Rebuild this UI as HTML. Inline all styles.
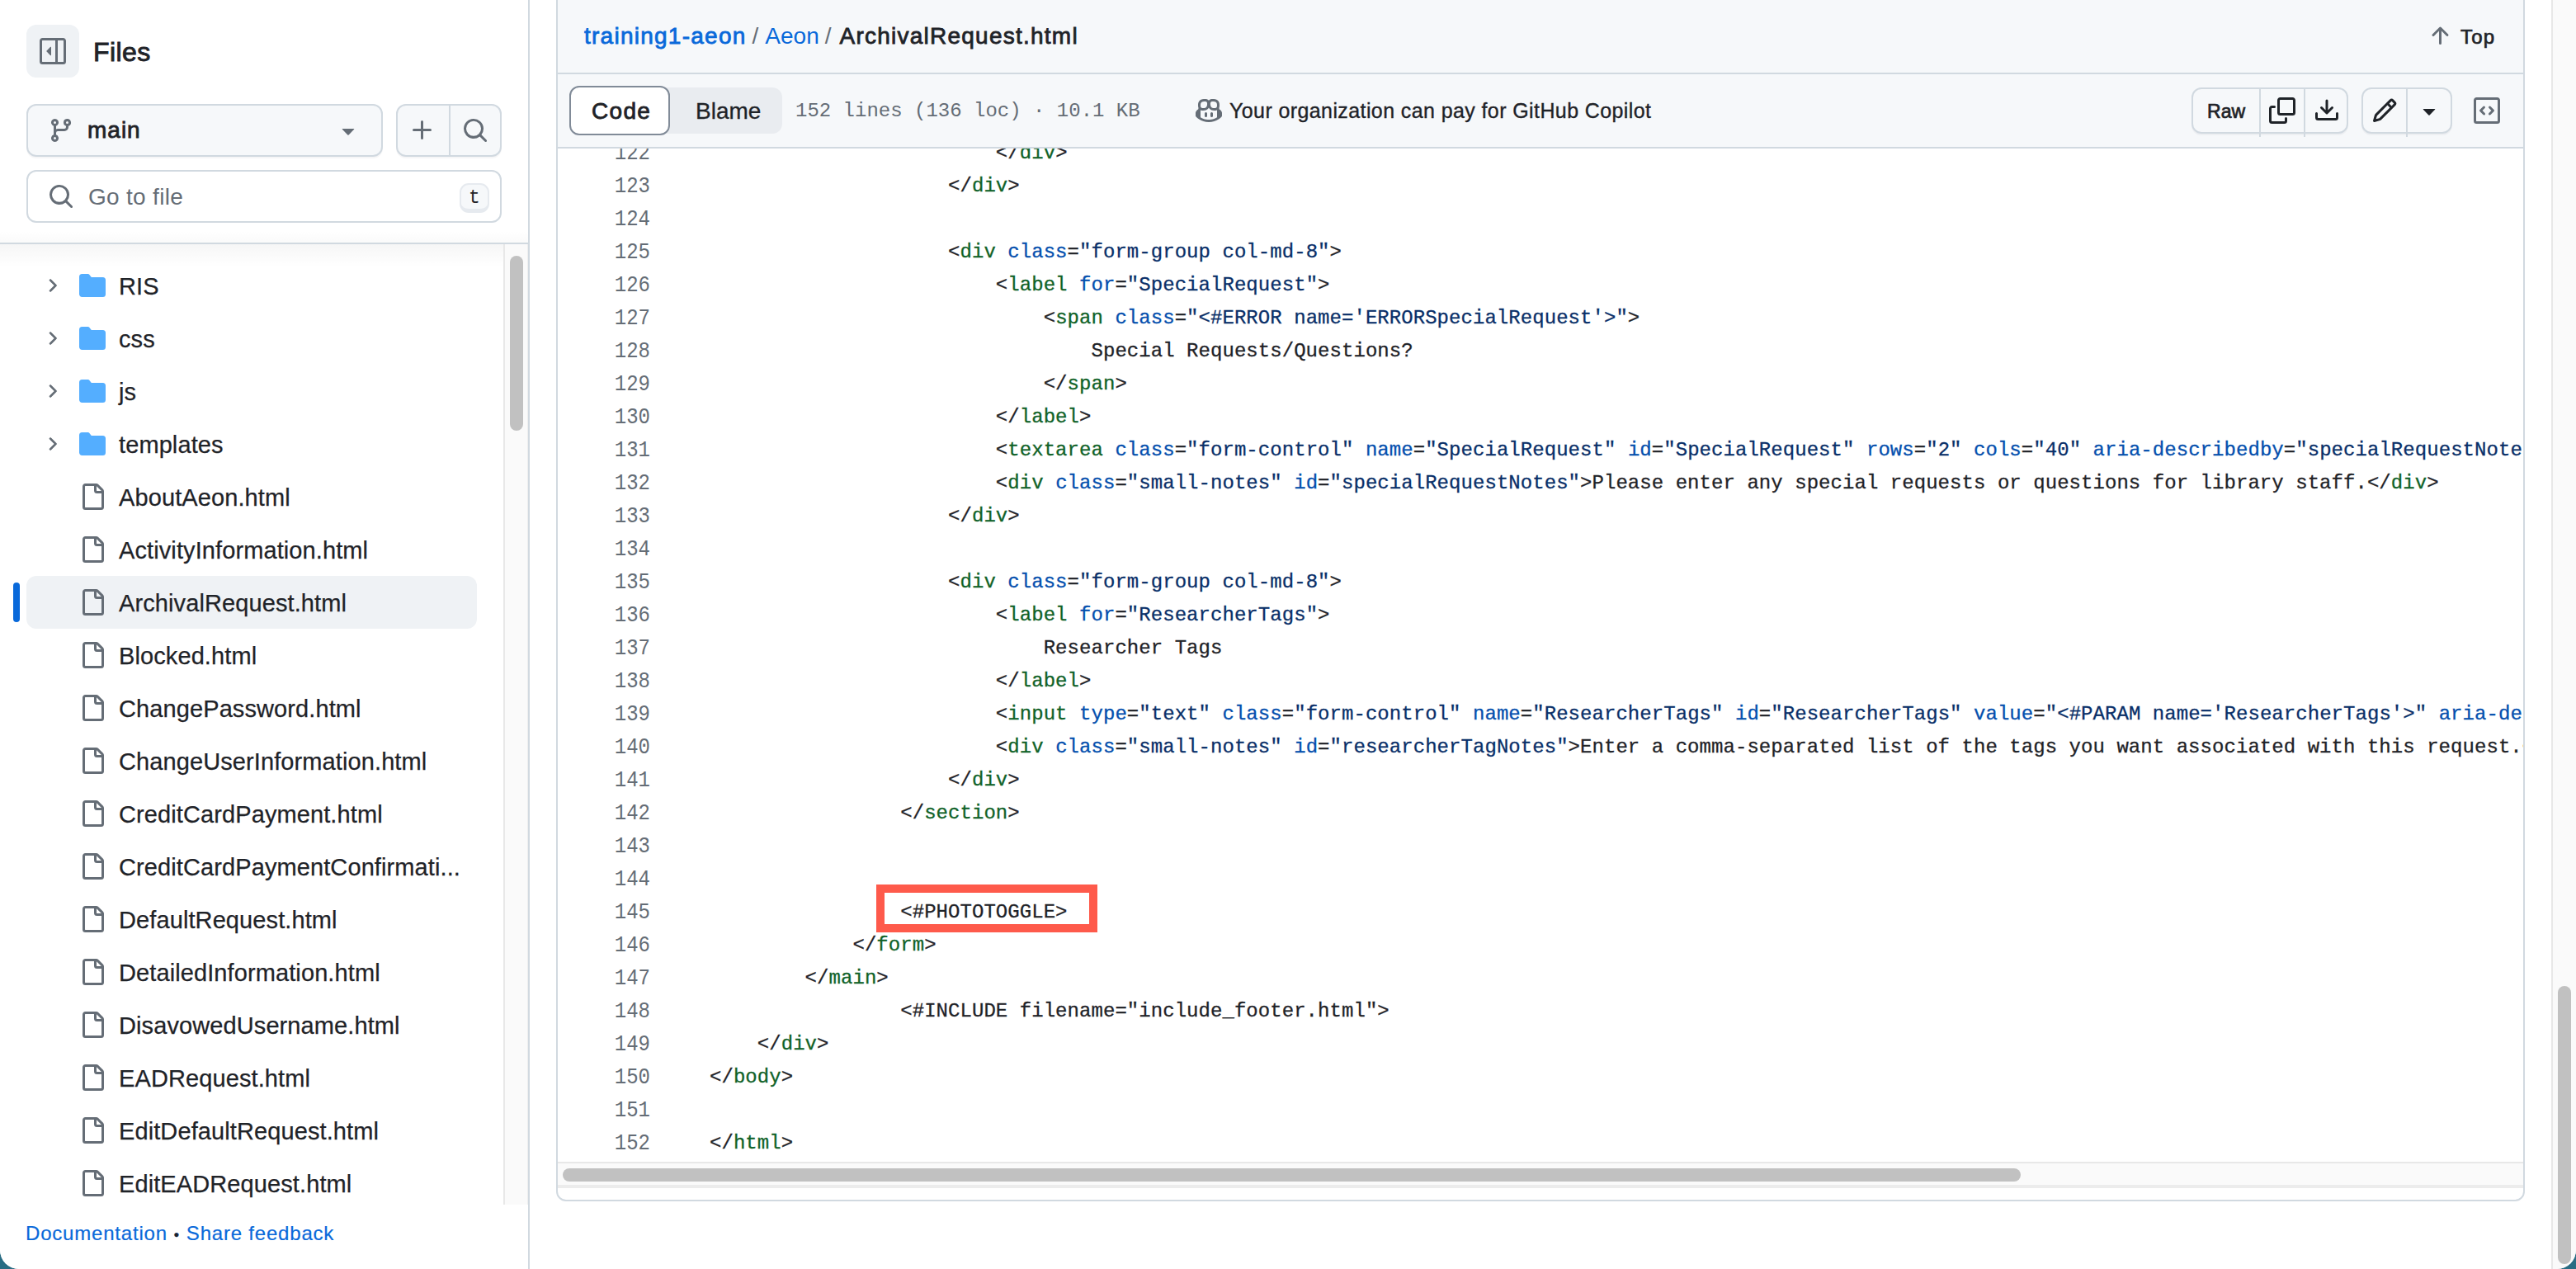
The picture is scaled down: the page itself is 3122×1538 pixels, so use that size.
<!DOCTYPE html>
<html><head><meta charset="utf-8">
<style>
html,body{margin:0;padding:0;}
html{background:#2a6d84;}
body{width:3122px;height:1538px;overflow:hidden;position:relative;font-family:"Liberation Sans",sans-serif;color:#1f2328;}
.win{position:absolute;left:0;top:0;width:3122px;height:1538px;background:#fff;border-radius:0 0 23px 23px;overflow:hidden;}
.abs{position:absolute;}
svg{display:block;}
/* sidebar */
.side{position:absolute;left:0;top:0;width:640px;height:1538px;background:#fff;border-right:2px solid #d1d9e0;}
.tog{left:32px;top:30px;width:64px;height:64px;background:#eff2f5;border-radius:12px;}
.files{left:113px;top:38px;font-size:32px;line-height:50px;letter-spacing:0.4px;white-space:nowrap;-webkit-text-stroke:0.9px #1f2328;}
.btn{background:#f6f8fa;border:2px solid #d1d9e0;border-radius:12px;box-shadow:0 2px 0 rgba(31,35,40,0.04);box-sizing:border-box;}
.hdrline{left:0;top:294px;width:640px;height:2px;background:#d1d9e0;}
.shadow{left:0;top:296px;width:610px;height:28px;background:linear-gradient(rgba(0,0,0,0.035),rgba(0,0,0,0));}
.shadow2{left:0;top:280px;width:640px;height:14px;background:linear-gradient(rgba(0,0,0,0),rgba(0,0,0,0.02));}
.tree{left:0;top:296px;width:610px;height:1164px;overflow:hidden;}
.row{position:absolute;left:32px;width:546px;height:64px;}
.row .ic{position:absolute;left:64px;top:16px;}
.row .chev{position:absolute;left:19px;top:20px;}
.row .t{position:absolute;left:112px;top:1px;line-height:64px;font-size:29px;letter-spacing:0.1px;white-space:nowrap;color:#1f2328;-webkit-text-stroke:0.25px #1f2328;}
.row.sel{background:#eff2f5;border-radius:12px;}
.selbar{left:16px;width:8px;height:48px;background:#0969da;border-radius:6px;}
.vtrack{left:610px;top:296px;width:30px;height:1164px;background:#fafafa;border-left:2px solid #e8e8e8;border-right:1px solid #efefef;box-sizing:border-box;}
.vthumb{left:618px;top:310px;width:16px;height:212px;background:#c1c1c1;border-radius:8px;}
.foot{left:31px;top:1477px;font-size:24px;line-height:36px;white-space:nowrap;color:#0969da;letter-spacing:0.8px;-webkit-text-stroke:0.2px #0969da;}
/* main panel */
.panel{position:absolute;left:674px;top:-20px;width:2386px;height:1476px;border:2px solid #d1d9e0;border-radius:12px;box-sizing:border-box;overflow:hidden;background:#fff;}
.phdr{position:absolute;left:0;top:0;width:100%;height:108px;background:#f6f8fa;border-bottom:2px solid #d1d9e0;box-sizing:border-box;}
.ptool{position:absolute;left:0;top:108px;width:100%;height:90px;background:#f6f8fa;border-bottom:2px solid #d1d9e0;box-sizing:border-box;}
.crumb{position:absolute;left:31px;top:34px;font-size:28px;line-height:40px;white-space:nowrap;}
.crumb a{color:#0969da;text-decoration:none;}
.crumb .sep{color:#656d76;margin:0 8px 0 7px;}
.code{position:absolute;left:0;top:198px;width:2382px;height:1228px;overflow:hidden;background:#fff;}
.ln{position:absolute;left:0;width:112px;text-align:right;font-family:"Liberation Mono",monospace;font-size:24px;line-height:40px;color:#656d76;transform:scaleY(1.17);transform-origin:50% 50%;}
.cl{position:absolute;left:184px;font-family:"Liberation Mono",monospace;font-size:24px;letter-spacing:0.05px;line-height:40px;white-space:pre;color:#1f2328;-webkit-text-stroke:0.3px currentColor;}
.tg{color:#116329;}
.at{color:#0550ae;}
.st{color:#0a3069;}
.htrack{position:absolute;left:0;top:1426px;width:100%;height:32px;background:#fafafa;border-top:2px solid #e8e8e8;border-bottom:4px solid #ececec;box-sizing:border-box;}
.hthumb{position:absolute;left:6px;top:1434px;width:1767px;height:16px;background:#c1c1c1;border-radius:8px;}
.redbox{left:1062px;top:1072px;width:268px;height:58px;border:10px solid #fe5a4b;box-sizing:border-box;}
.ptrack{left:3092px;top:0;width:30px;height:1538px;background:#fafafa;border-left:2px solid #e8e8e8;box-sizing:border-box;}
.pthumb{left:3100px;top:1195px;width:16px;height:337px;background:#c1c1c1;border-radius:8px;}
</style></head><body>
<div class="win">

<!-- SIDEBAR -->
<div class="side">
  <div class="abs tog">
    <svg class="abs" style="left:16px;top:16px" width="32" height="32" viewBox="0 0 16 16" fill="#656d76"><path fill-rule="evenodd" d="M1.75 0h12.5C15.216 0 16 .784 16 1.75v12.5A1.75 1.75 0 0 1 14.25 16H1.75A1.75 1.75 0 0 1 0 14.25V1.75C0 .784.784 0 1.75 0ZM1.75 1.5a.25.25 0 0 0-.25.25v12.5c0 .138.112.25.25.25H9.5v-13ZM11 1.5v13h3.25a.25.25 0 0 0 .25-.25V1.75a.25.25 0 0 0-.25-.25Z"/><path d="M4.177 7.823l2.396-2.396A.25.25 0 0 1 7 5.604v4.792a.25.25 0 0 1-.427.177L4.177 8.177a.25.25 0 0 1 0-.354Z"/></svg>
  </div>
  <div class="abs files">Files</div>

  <div class="abs btn" style="left:32px;top:126px;width:432px;height:64px;">
    <svg class="abs" style="left:24px;top:14px" width="32" height="32" viewBox="0 0 16 16" fill="#656d76"><path d="M9.5 3.25a2.25 2.25 0 1 1 3 2.122V6A2.5 2.5 0 0 1 10 8.5H6a1 1 0 0 0-1 1v1.128a2.251 2.251 0 1 1-1.5 0V5.372a2.25 2.25 0 1 1 1.5 0v1.836A2.493 2.493 0 0 1 6 7h4a1 1 0 0 0 1-1v-.628A2.25 2.25 0 0 1 9.5 3.25Zm-6 0a.75.75 0 1 0 1.5 0 .75.75 0 0 0-1.5 0Zm8.25-.75a.75.75 0 1 0 0 1.5.75.75 0 0 0 0-1.5ZM4.25 12a.75.75 0 1 0 0 1.5.75.75 0 0 0 0-1.5Z"/></svg>
    <div class="abs" style="left:72px;top:10px;font-size:28px;line-height:40px;letter-spacing:1px;-webkit-text-stroke:0.8px #1f2328;">main</div>
    <svg class="abs" style="left:372px;top:14px" width="32" height="32" viewBox="0 0 16 16" fill="#656d76"><path d="m4.427 7.427 3.396 3.396a.25.25 0 0 0 .354 0l3.396-3.396A.25.25 0 0 0 11.396 7H4.604a.25.25 0 0 0-.177.427Z"/></svg>
  </div>
  <div class="abs btn" style="left:480px;top:126px;width:128px;height:64px;">
    <div class="abs" style="left:62px;top:0;width:2px;height:60px;background:#d1d9e0"></div>
    <svg class="abs" style="left:14px;top:14px" width="32" height="32" viewBox="0 0 16 16" fill="#656d76"><path d="M7.75 2a.75.75 0 0 1 .75.75V7h4.25a.75.75 0 0 1 0 1.5H8.5v4.25a.75.75 0 0 1-1.5 0V8.5H2.75a.75.75 0 0 1 0-1.5H7V2.75A.75.75 0 0 1 7.75 2Z"/></svg>
    <svg class="abs" style="left:78px;top:14px" width="32" height="32" viewBox="0 0 16 16" fill="#656d76"><path d="M10.68 11.74a6 6 0 0 1-7.922-8.982 6 6 0 0 1 8.982 7.922l3.04 3.04a.749.749 0 0 1-.326 1.275.749.749 0 0 1-.734-.215ZM11.5 7a4.499 4.499 0 1 0-8.997 0A4.499 4.499 0 0 0 11.5 7Z"/></svg>
  </div>
  <div class="abs" style="left:32px;top:206px;width:576px;height:64px;border:2px solid #d1d9e0;border-radius:12px;box-sizing:border-box;background:#fff;">
    <svg class="abs" style="left:24px;top:14px" width="32" height="32" viewBox="0 0 16 16" fill="#656d76"><path d="M10.68 11.74a6 6 0 0 1-7.922-8.982 6 6 0 0 1 8.982 7.922l3.04 3.04a.749.749 0 0 1-.326 1.275.749.749 0 0 1-.734-.215ZM11.5 7a4.499 4.499 0 1 0-8.997 0A4.499 4.499 0 0 0 11.5 7Z"/></svg>
    <div class="abs" style="left:73px;top:11px;font-size:28px;line-height:40px;color:#656d76;letter-spacing:0.3px;">Go to file</div>
    <div class="abs" style="left:523px;top:14px;width:36px;height:36px;background:#f6f8fa;border:2px solid #e6eaef;border-bottom-width:5px;border-radius:11px;box-sizing:border-box;font-family:'Liberation Mono',monospace;font-size:23px;line-height:32px;text-align:center;color:#1f2328;">t</div>
  </div>

  <div class="abs shadow2"></div>
  <div class="abs hdrline"></div>
  <div class="abs tree" id="tree">
<div class="row" style="top:18px"><svg class="chev" width="24" height="24" viewBox="0 0 16 16" fill="#656d76" stroke="#656d76" stroke-width="0.4" stroke-linejoin="round"><path d="M6.22 3.22a.75.75 0 0 1 1.06 0l4.25 4.25a.75.75 0 0 1 0 1.06l-4.25 4.25a.751.751 0 0 1-1.042-.018.751.751 0 0 1-.018-1.042L9.94 8 6.22 4.28a.75.75 0 0 1 0-1.06Z"/></svg><svg class="ic" width="32" height="32" viewBox="0 0 16 16" fill="#54aeff"><path d="M1.75 1A1.75 1.75 0 0 0 0 2.75v10.5C0 14.216.784 15 1.75 15h12.5A1.75 1.75 0 0 0 16 13.25v-8.5A1.75 1.75 0 0 0 14.25 3H7.5a.25.25 0 0 1-.2-.1l-.9-1.2C6.07 1.26 5.55 1 5 1H1.75Z"/></svg><div class="t">RIS</div></div>
<div class="row" style="top:82px"><svg class="chev" width="24" height="24" viewBox="0 0 16 16" fill="#656d76" stroke="#656d76" stroke-width="0.4" stroke-linejoin="round"><path d="M6.22 3.22a.75.75 0 0 1 1.06 0l4.25 4.25a.75.75 0 0 1 0 1.06l-4.25 4.25a.751.751 0 0 1-1.042-.018.751.751 0 0 1-.018-1.042L9.94 8 6.22 4.28a.75.75 0 0 1 0-1.06Z"/></svg><svg class="ic" width="32" height="32" viewBox="0 0 16 16" fill="#54aeff"><path d="M1.75 1A1.75 1.75 0 0 0 0 2.75v10.5C0 14.216.784 15 1.75 15h12.5A1.75 1.75 0 0 0 16 13.25v-8.5A1.75 1.75 0 0 0 14.25 3H7.5a.25.25 0 0 1-.2-.1l-.9-1.2C6.07 1.26 5.55 1 5 1H1.75Z"/></svg><div class="t">css</div></div>
<div class="row" style="top:146px"><svg class="chev" width="24" height="24" viewBox="0 0 16 16" fill="#656d76" stroke="#656d76" stroke-width="0.4" stroke-linejoin="round"><path d="M6.22 3.22a.75.75 0 0 1 1.06 0l4.25 4.25a.75.75 0 0 1 0 1.06l-4.25 4.25a.751.751 0 0 1-1.042-.018.751.751 0 0 1-.018-1.042L9.94 8 6.22 4.28a.75.75 0 0 1 0-1.06Z"/></svg><svg class="ic" width="32" height="32" viewBox="0 0 16 16" fill="#54aeff"><path d="M1.75 1A1.75 1.75 0 0 0 0 2.75v10.5C0 14.216.784 15 1.75 15h12.5A1.75 1.75 0 0 0 16 13.25v-8.5A1.75 1.75 0 0 0 14.25 3H7.5a.25.25 0 0 1-.2-.1l-.9-1.2C6.07 1.26 5.55 1 5 1H1.75Z"/></svg><div class="t">js</div></div>
<div class="row" style="top:210px"><svg class="chev" width="24" height="24" viewBox="0 0 16 16" fill="#656d76" stroke="#656d76" stroke-width="0.4" stroke-linejoin="round"><path d="M6.22 3.22a.75.75 0 0 1 1.06 0l4.25 4.25a.75.75 0 0 1 0 1.06l-4.25 4.25a.751.751 0 0 1-1.042-.018.751.751 0 0 1-.018-1.042L9.94 8 6.22 4.28a.75.75 0 0 1 0-1.06Z"/></svg><svg class="ic" width="32" height="32" viewBox="0 0 16 16" fill="#54aeff"><path d="M1.75 1A1.75 1.75 0 0 0 0 2.75v10.5C0 14.216.784 15 1.75 15h12.5A1.75 1.75 0 0 0 16 13.25v-8.5A1.75 1.75 0 0 0 14.25 3H7.5a.25.25 0 0 1-.2-.1l-.9-1.2C6.07 1.26 5.55 1 5 1H1.75Z"/></svg><div class="t">templates</div></div>
<div class="row" style="top:274px"><svg class="ic" width="32" height="32" viewBox="0 0 16 16" fill="#656d76"><path d="M2 1.75C2 .784 2.784 0 3.75 0h6.586c.464 0 .909.184 1.237.513l2.914 2.914c.329.328.513.773.513 1.237v9.586A1.75 1.75 0 0 1 13.25 16h-9.5A1.75 1.75 0 0 1 2 14.25Zm1.75-.25a.25.25 0 0 0-.25.25v12.5c0 .138.112.25.25.25h9.5a.25.25 0 0 0 .25-.25V6h-2.75A1.75 1.75 0 0 1 9 4.25V1.5Zm6.75.062V4.25c0 .138.112.25.25.25h2.688l-.011-.013-2.914-2.914-.013-.011Z"/></svg><div class="t">AboutAeon.html</div></div>
<div class="row" style="top:338px"><svg class="ic" width="32" height="32" viewBox="0 0 16 16" fill="#656d76"><path d="M2 1.75C2 .784 2.784 0 3.75 0h6.586c.464 0 .909.184 1.237.513l2.914 2.914c.329.328.513.773.513 1.237v9.586A1.75 1.75 0 0 1 13.25 16h-9.5A1.75 1.75 0 0 1 2 14.25Zm1.75-.25a.25.25 0 0 0-.25.25v12.5c0 .138.112.25.25.25h9.5a.25.25 0 0 0 .25-.25V6h-2.75A1.75 1.75 0 0 1 9 4.25V1.5Zm6.75.062V4.25c0 .138.112.25.25.25h2.688l-.011-.013-2.914-2.914-.013-.011Z"/></svg><div class="t">ActivityInformation.html</div></div>
<div class="row sel" style="top:402px"><svg class="ic" width="32" height="32" viewBox="0 0 16 16" fill="#656d76"><path d="M2 1.75C2 .784 2.784 0 3.75 0h6.586c.464 0 .909.184 1.237.513l2.914 2.914c.329.328.513.773.513 1.237v9.586A1.75 1.75 0 0 1 13.25 16h-9.5A1.75 1.75 0 0 1 2 14.25Zm1.75-.25a.25.25 0 0 0-.25.25v12.5c0 .138.112.25.25.25h9.5a.25.25 0 0 0 .25-.25V6h-2.75A1.75 1.75 0 0 1 9 4.25V1.5Zm6.75.062V4.25c0 .138.112.25.25.25h2.688l-.011-.013-2.914-2.914-.013-.011Z"/></svg><div class="t">ArchivalRequest.html</div></div>
<div class="abs selbar" style="top:410px"></div>
<div class="row" style="top:466px"><svg class="ic" width="32" height="32" viewBox="0 0 16 16" fill="#656d76"><path d="M2 1.75C2 .784 2.784 0 3.75 0h6.586c.464 0 .909.184 1.237.513l2.914 2.914c.329.328.513.773.513 1.237v9.586A1.75 1.75 0 0 1 13.25 16h-9.5A1.75 1.75 0 0 1 2 14.25Zm1.75-.25a.25.25 0 0 0-.25.25v12.5c0 .138.112.25.25.25h9.5a.25.25 0 0 0 .25-.25V6h-2.75A1.75 1.75 0 0 1 9 4.25V1.5Zm6.75.062V4.25c0 .138.112.25.25.25h2.688l-.011-.013-2.914-2.914-.013-.011Z"/></svg><div class="t">Blocked.html</div></div>
<div class="row" style="top:530px"><svg class="ic" width="32" height="32" viewBox="0 0 16 16" fill="#656d76"><path d="M2 1.75C2 .784 2.784 0 3.75 0h6.586c.464 0 .909.184 1.237.513l2.914 2.914c.329.328.513.773.513 1.237v9.586A1.75 1.75 0 0 1 13.25 16h-9.5A1.75 1.75 0 0 1 2 14.25Zm1.75-.25a.25.25 0 0 0-.25.25v12.5c0 .138.112.25.25.25h9.5a.25.25 0 0 0 .25-.25V6h-2.75A1.75 1.75 0 0 1 9 4.25V1.5Zm6.75.062V4.25c0 .138.112.25.25.25h2.688l-.011-.013-2.914-2.914-.013-.011Z"/></svg><div class="t">ChangePassword.html</div></div>
<div class="row" style="top:594px"><svg class="ic" width="32" height="32" viewBox="0 0 16 16" fill="#656d76"><path d="M2 1.75C2 .784 2.784 0 3.75 0h6.586c.464 0 .909.184 1.237.513l2.914 2.914c.329.328.513.773.513 1.237v9.586A1.75 1.75 0 0 1 13.25 16h-9.5A1.75 1.75 0 0 1 2 14.25Zm1.75-.25a.25.25 0 0 0-.25.25v12.5c0 .138.112.25.25.25h9.5a.25.25 0 0 0 .25-.25V6h-2.75A1.75 1.75 0 0 1 9 4.25V1.5Zm6.75.062V4.25c0 .138.112.25.25.25h2.688l-.011-.013-2.914-2.914-.013-.011Z"/></svg><div class="t">ChangeUserInformation.html</div></div>
<div class="row" style="top:658px"><svg class="ic" width="32" height="32" viewBox="0 0 16 16" fill="#656d76"><path d="M2 1.75C2 .784 2.784 0 3.75 0h6.586c.464 0 .909.184 1.237.513l2.914 2.914c.329.328.513.773.513 1.237v9.586A1.75 1.75 0 0 1 13.25 16h-9.5A1.75 1.75 0 0 1 2 14.25Zm1.75-.25a.25.25 0 0 0-.25.25v12.5c0 .138.112.25.25.25h9.5a.25.25 0 0 0 .25-.25V6h-2.75A1.75 1.75 0 0 1 9 4.25V1.5Zm6.75.062V4.25c0 .138.112.25.25.25h2.688l-.011-.013-2.914-2.914-.013-.011Z"/></svg><div class="t">CreditCardPayment.html</div></div>
<div class="row" style="top:722px"><svg class="ic" width="32" height="32" viewBox="0 0 16 16" fill="#656d76"><path d="M2 1.75C2 .784 2.784 0 3.75 0h6.586c.464 0 .909.184 1.237.513l2.914 2.914c.329.328.513.773.513 1.237v9.586A1.75 1.75 0 0 1 13.25 16h-9.5A1.75 1.75 0 0 1 2 14.25Zm1.75-.25a.25.25 0 0 0-.25.25v12.5c0 .138.112.25.25.25h9.5a.25.25 0 0 0 .25-.25V6h-2.75A1.75 1.75 0 0 1 9 4.25V1.5Zm6.75.062V4.25c0 .138.112.25.25.25h2.688l-.011-.013-2.914-2.914-.013-.011Z"/></svg><div class="t">CreditCardPaymentConfirmati...</div></div>
<div class="row" style="top:786px"><svg class="ic" width="32" height="32" viewBox="0 0 16 16" fill="#656d76"><path d="M2 1.75C2 .784 2.784 0 3.75 0h6.586c.464 0 .909.184 1.237.513l2.914 2.914c.329.328.513.773.513 1.237v9.586A1.75 1.75 0 0 1 13.25 16h-9.5A1.75 1.75 0 0 1 2 14.25Zm1.75-.25a.25.25 0 0 0-.25.25v12.5c0 .138.112.25.25.25h9.5a.25.25 0 0 0 .25-.25V6h-2.75A1.75 1.75 0 0 1 9 4.25V1.5Zm6.75.062V4.25c0 .138.112.25.25.25h2.688l-.011-.013-2.914-2.914-.013-.011Z"/></svg><div class="t">DefaultRequest.html</div></div>
<div class="row" style="top:850px"><svg class="ic" width="32" height="32" viewBox="0 0 16 16" fill="#656d76"><path d="M2 1.75C2 .784 2.784 0 3.75 0h6.586c.464 0 .909.184 1.237.513l2.914 2.914c.329.328.513.773.513 1.237v9.586A1.75 1.75 0 0 1 13.25 16h-9.5A1.75 1.75 0 0 1 2 14.25Zm1.75-.25a.25.25 0 0 0-.25.25v12.5c0 .138.112.25.25.25h9.5a.25.25 0 0 0 .25-.25V6h-2.75A1.75 1.75 0 0 1 9 4.25V1.5Zm6.75.062V4.25c0 .138.112.25.25.25h2.688l-.011-.013-2.914-2.914-.013-.011Z"/></svg><div class="t">DetailedInformation.html</div></div>
<div class="row" style="top:914px"><svg class="ic" width="32" height="32" viewBox="0 0 16 16" fill="#656d76"><path d="M2 1.75C2 .784 2.784 0 3.75 0h6.586c.464 0 .909.184 1.237.513l2.914 2.914c.329.328.513.773.513 1.237v9.586A1.75 1.75 0 0 1 13.25 16h-9.5A1.75 1.75 0 0 1 2 14.25Zm1.75-.25a.25.25 0 0 0-.25.25v12.5c0 .138.112.25.25.25h9.5a.25.25 0 0 0 .25-.25V6h-2.75A1.75 1.75 0 0 1 9 4.25V1.5Zm6.75.062V4.25c0 .138.112.25.25.25h2.688l-.011-.013-2.914-2.914-.013-.011Z"/></svg><div class="t">DisavowedUsername.html</div></div>
<div class="row" style="top:978px"><svg class="ic" width="32" height="32" viewBox="0 0 16 16" fill="#656d76"><path d="M2 1.75C2 .784 2.784 0 3.75 0h6.586c.464 0 .909.184 1.237.513l2.914 2.914c.329.328.513.773.513 1.237v9.586A1.75 1.75 0 0 1 13.25 16h-9.5A1.75 1.75 0 0 1 2 14.25Zm1.75-.25a.25.25 0 0 0-.25.25v12.5c0 .138.112.25.25.25h9.5a.25.25 0 0 0 .25-.25V6h-2.75A1.75 1.75 0 0 1 9 4.25V1.5Zm6.75.062V4.25c0 .138.112.25.25.25h2.688l-.011-.013-2.914-2.914-.013-.011Z"/></svg><div class="t">EADRequest.html</div></div>
<div class="row" style="top:1042px"><svg class="ic" width="32" height="32" viewBox="0 0 16 16" fill="#656d76"><path d="M2 1.75C2 .784 2.784 0 3.75 0h6.586c.464 0 .909.184 1.237.513l2.914 2.914c.329.328.513.773.513 1.237v9.586A1.75 1.75 0 0 1 13.25 16h-9.5A1.75 1.75 0 0 1 2 14.25Zm1.75-.25a.25.25 0 0 0-.25.25v12.5c0 .138.112.25.25.25h9.5a.25.25 0 0 0 .25-.25V6h-2.75A1.75 1.75 0 0 1 9 4.25V1.5Zm6.75.062V4.25c0 .138.112.25.25.25h2.688l-.011-.013-2.914-2.914-.013-.011Z"/></svg><div class="t">EditDefaultRequest.html</div></div>
<div class="row" style="top:1106px"><svg class="ic" width="32" height="32" viewBox="0 0 16 16" fill="#656d76"><path d="M2 1.75C2 .784 2.784 0 3.75 0h6.586c.464 0 .909.184 1.237.513l2.914 2.914c.329.328.513.773.513 1.237v9.586A1.75 1.75 0 0 1 13.25 16h-9.5A1.75 1.75 0 0 1 2 14.25Zm1.75-.25a.25.25 0 0 0-.25.25v12.5c0 .138.112.25.25.25h9.5a.25.25 0 0 0 .25-.25V6h-2.75A1.75 1.75 0 0 1 9 4.25V1.5Zm6.75.062V4.25c0 .138.112.25.25.25h2.688l-.011-.013-2.914-2.914-.013-.011Z"/></svg><div class="t">EditEADRequest.html</div></div>
</div><!--/tree-->
  <div class="abs shadow"></div>
  <div class="abs vtrack"></div>
  <div class="abs vthumb"></div>

  <div class="abs foot">Documentation <span style="color:#1f2328;font-size:12px;vertical-align:3px">&#9679;</span> Share feedback</div>
</div>

<!-- MAIN PANEL -->
<div class="panel" id="panel">
  <div class="phdr">
    <div class="crumb" style="top:42px;left:32px"><a style="letter-spacing:1.25px;-webkit-text-stroke:0.8px #0969da">training1-aeon</a><span class="sep">/</span><a>Aeon</a><span class="sep">/</span><span style="color:#1f2328;letter-spacing:1.24px;margin-left:2px;-webkit-text-stroke:0.8px #1f2328">ArchivalRequest.html</span></div>
    <div class="abs" style="left:2265px;top:47px;">
      <svg class="abs" style="left:0;top:-1px" width="32" height="32" viewBox="0 0 16 16" fill="#656d76"><path d="M3.47 7.78a.75.75 0 0 1 0-1.06l4.25-4.25a.75.75 0 0 1 1.06 0l4.25 4.25a.751.751 0 0 1-.018 1.042.751.751 0 0 1-1.042.018L9 4.81v7.44a.75.75 0 0 1-1.5 0V4.81L4.53 7.78a.75.75 0 0 1-1.06 0Z"/></svg>
      <div class="abs" style="left:41px;top:-2px;font-size:24px;line-height:36px;white-space:nowrap;letter-spacing:1.15px;-webkit-text-stroke:0.7px #1f2328;">Top</div>
    </div>
  </div>
  <div class="ptool">
    <div class="abs" style="left:14px;top:16px;width:258px;height:56px;background:#e9ecf0;border-radius:12px;"></div>
    <div class="abs" style="left:14px;top:14px;width:122px;height:60px;background:#fff;border:2px solid #818b98;border-radius:12px;box-sizing:border-box;"></div>
    <div class="abs" style="left:41px;top:25px;font-size:28px;line-height:40px;letter-spacing:1.3px;-webkit-text-stroke:0.8px #1f2328;">Code</div>
    <div class="abs" style="left:167px;top:25px;font-size:28px;line-height:40px;-webkit-text-stroke:0.3px #1f2328;">Blame</div>
    <div class="abs" style="left:288px;top:25px;font-family:'Liberation Mono',monospace;font-size:24px;line-height:40px;color:#656d76;white-space:pre;">152 lines (136 loc) · 10.1 KB</div>
    <svg class="abs" style="left:773px;top:28px" width="32" height="32" viewBox="0 0 16 16" fill="#656d76"><path d="M7.998 15.035c-4.562 0-7.873-2.914-7.998-3.749V9.338c.085-.628.677-1.686 1.588-2.065.013-.07.024-.143.036-.218.029-.183.06-.384.126-.612-.201-.508-.254-1.084-.254-1.656 0-.87.128-1.769.693-2.484.579-.733 1.494-1.124 2.724-1.261 1.206-.134 2.262.034 2.944.765.05.053.096.108.139.165.044-.057.094-.112.143-.165.682-.731 1.738-.899 2.944-.765 1.23.137 2.145.528 2.724 1.261.566.715.693 1.614.693 2.484 0 .572-.053 1.148-.254 1.656.066.228.098.429.126.612.012.076.024.148.037.218.924.385 1.522 1.471 1.591 2.095v1.872c0 .766-3.351 3.795-8.002 3.795Zm0-1.485c2.28 0 4.584-1.11 5.002-1.433V7.862l-.023-.116c-.49.21-1.075.291-1.727.291-1.146 0-2.059-.327-2.71-.991A3.222 3.222 0 0 1 8 6.303a3.24 3.24 0 0 1-.544.743c-.65.664-1.563.991-2.71.991-.652 0-1.236-.081-1.727-.291l-.023.116v4.255c.419.323 2.722 1.433 5.002 1.433ZM6.762 2.83c-.193-.206-.637-.413-1.682-.297-1.019.113-1.479.404-1.713.7-.247.312-.369.789-.369 1.554 0 .793.129 1.171.308 1.371.162.181.519.379 1.442.379.853 0 1.339-.235 1.638-.54.315-.322.527-.827.617-1.553.117-.935-.037-1.395-.241-1.614Zm4.155-.297c-1.044-.116-1.488.091-1.681.297-.204.219-.359.679-.242 1.614.091.726.303 1.231.618 1.553.299.305.784.54 1.638.54.922 0 1.28-.198 1.442-.379.179-.2.308-.578.308-1.371 0-.765-.123-1.242-.37-1.554-.233-.296-.693-.587-1.713-.7Z"/><path d="M6.25 9.037a.75.75 0 0 1 .75.75v1.501a.75.75 0 0 1-1.5 0V9.787a.75.75 0 0 1 .75-.75Zm4.25.75v1.501a.75.75 0 0 1-1.5 0V9.787a.75.75 0 0 1 1.5 0Z"/></svg>
    <div class="abs" style="left:814px;top:26px;font-size:25px;line-height:36px;letter-spacing:0.4px;white-space:nowrap;-webkit-text-stroke:0.35px #1f2328;">Your organization can pay for GitHub Copilot</div>

    <div class="abs btn" style="left:1980px;top:16px;width:190px;height:56px;"></div>
    <div class="abs" style="left:2062px;top:18px;width:2px;height:58px;background:#d1d9e0"></div>
    <div class="abs" style="left:2116px;top:18px;width:2px;height:58px;background:#d1d9e0"></div>
    <div class="abs" style="left:1999px;top:27px;font-size:23px;line-height:36px;letter-spacing:0.1px;-webkit-text-stroke:0.7px #1f2328;">Raw</div>
    <svg class="abs" style="left:2074px;top:28px" width="32" height="32" viewBox="0 0 16 16" fill="#1f2328"><path d="M0 6.75C0 5.784.784 5 1.75 5h1.5a.75.75 0 0 1 0 1.5h-1.5a.25.25 0 0 0-.25.25v7.5c0 .138.112.25.25.25h7.5a.25.25 0 0 0 .25-.25v-1.5a.75.75 0 0 1 1.5 0v1.5A1.75 1.75 0 0 1 9.25 16h-7.5A1.75 1.75 0 0 1 0 14.25Z"/><path d="M5 1.75C5 .784 5.784 0 6.75 0h7.5C15.216 0 16 .784 16 1.75v7.5A1.75 1.75 0 0 1 14.25 11h-7.5A1.75 1.75 0 0 1 5 9.25Zm1.75-.25a.25.25 0 0 0-.25.25v7.5c0 .138.112.25.25.25h7.5a.25.25 0 0 0 .25-.25v-7.5a.25.25 0 0 0-.25-.25Z"/></svg>
    <svg class="abs" style="left:2128px;top:28px" width="32" height="32" viewBox="0 0 16 16" fill="#1f2328"><path d="M2.75 14A1.75 1.75 0 0 1 1 12.25v-2.5a.75.75 0 0 1 1.5 0v2.5c0 .138.112.25.25.25h10.5a.25.25 0 0 0 .25-.25v-2.5a.75.75 0 0 1 1.5 0v2.5A1.75 1.75 0 0 1 13.25 14Z"/><path d="M7.25 7.689V2a.75.75 0 0 1 1.5 0v5.689l1.97-1.969a.749.749 0 1 1 1.06 1.06l-3.25 3.25a.749.749 0 0 1-1.06 0L4.22 6.78a.749.749 0 1 1 1.06-1.06l1.97 1.969Z"/></svg>

    <div class="abs btn" style="left:2186px;top:16px;width:110px;height:56px;"></div>
    <div class="abs" style="left:2240px;top:18px;width:2px;height:58px;background:#d1d9e0"></div>
    <svg class="abs" style="left:2198px;top:28px" width="32" height="32" viewBox="0 0 16 16" fill="#1f2328"><path d="M11.013 1.427a1.75 1.75 0 0 1 2.474 0l1.086 1.086a1.75 1.75 0 0 1 0 2.474l-8.61 8.61c-.21.21-.47.364-.756.445l-3.251.93a.75.75 0 0 1-.927-.928l.929-3.25c.081-.286.235-.547.445-.758l8.61-8.61Zm.176 4.823L9.75 4.81l-6.286 6.287a.253.253 0 0 0-.064.108l-.558 1.953 1.953-.558a.253.253 0 0 0 .108-.064Zm1.238-3.763a.25.25 0 0 0-.354 0L10.811 3.75l1.439 1.44 1.263-1.263a.25.25 0 0 0 0-.354Z"/></svg>
    <svg class="abs" style="left:2252px;top:28px" width="32" height="32" viewBox="0 0 16 16" fill="#1f2328"><path d="m4.427 7.427 3.396 3.396a.25.25 0 0 0 .354 0l3.396-3.396A.25.25 0 0 0 11.396 7H4.604a.25.25 0 0 0-.177.427Z"/></svg>

    <svg class="abs" style="left:2322px;top:28px" width="32" height="32" viewBox="0 0 16 16" fill="#656d76"><path d="M0 1.75C0 .784.784 0 1.75 0h12.5C15.216 0 16 .784 16 1.75v12.5A1.75 1.75 0 0 1 14.25 16H1.75A1.75 1.75 0 0 1 0 14.25Zm1.75-.25a.25.25 0 0 0-.25.25v12.5c0 .138.112.25.25.25h12.5a.25.25 0 0 0 .25-.25V1.75a.25.25 0 0 0-.25-.25Zm7.47 3.97a.75.75 0 0 1 1.06 0l2 2a.75.75 0 0 1 0 1.06l-2 2a.749.749 0 0 1-1.275-.326.749.749 0 0 1 .215-.734L10.69 8 9.22 6.53a.75.75 0 0 1 0-1.06ZM6.78 6.53 5.31 8l1.47 1.47a.749.749 0 0 1-.326 1.275.749.749 0 0 1-.734-.215l-2-2a.75.75 0 0 1 0-1.06l2-2a.751.751 0 0 1 1.042.018.751.751 0 0 1 .018 1.042Z"/></svg>
  </div>

  <div class="code" id="code">
<div class="ln" style="top:-14px">122</div>
<div class="cl" style="top:-14px">                        &lt;/<span class="tg">div</span>&gt;</div>
<div class="ln" style="top:26px">123</div>
<div class="cl" style="top:26px">                    &lt;/<span class="tg">div</span>&gt;</div>
<div class="ln" style="top:66px">124</div>
<div class="ln" style="top:106px">125</div>
<div class="cl" style="top:106px">                    &lt;<span class="tg">div</span> <span class="at">class</span>=<span class="st">&quot;form-group col-md-8&quot;</span>&gt;</div>
<div class="ln" style="top:146px">126</div>
<div class="cl" style="top:146px">                        &lt;<span class="tg">label</span> <span class="at">for</span>=<span class="st">&quot;SpecialRequest&quot;</span>&gt;</div>
<div class="ln" style="top:186px">127</div>
<div class="cl" style="top:186px">                            &lt;<span class="tg">span</span> <span class="at">class</span>=<span class="st">&quot;&lt;#ERROR name=&#x27;ERRORSpecialRequest&#x27;&gt;&quot;</span>&gt;</div>
<div class="ln" style="top:226px">128</div>
<div class="cl" style="top:226px">                                Special Requests/Questions?</div>
<div class="ln" style="top:266px">129</div>
<div class="cl" style="top:266px">                            &lt;/<span class="tg">span</span>&gt;</div>
<div class="ln" style="top:306px">130</div>
<div class="cl" style="top:306px">                        &lt;/<span class="tg">label</span>&gt;</div>
<div class="ln" style="top:346px">131</div>
<div class="cl" style="top:346px">                        &lt;<span class="tg">textarea</span> <span class="at">class</span>=<span class="st">&quot;form-control&quot;</span> <span class="at">name</span>=<span class="st">&quot;SpecialRequest&quot;</span> <span class="at">id</span>=<span class="st">&quot;SpecialRequest&quot;</span> <span class="at">rows</span>=<span class="st">&quot;2&quot;</span> <span class="at">cols</span>=<span class="st">&quot;40&quot;</span> <span class="at">aria-describedby</span>=<span class="st">&quot;specialRequestNotes&quot;</span>&gt;&lt;/<span class="tg">textarea</span>&gt;</div>
<div class="ln" style="top:386px">132</div>
<div class="cl" style="top:386px">                        &lt;<span class="tg">div</span> <span class="at">class</span>=<span class="st">&quot;small-notes&quot;</span> <span class="at">id</span>=<span class="st">&quot;specialRequestNotes&quot;</span>&gt;Please enter any special requests or questions for library staff.&lt;/<span class="tg">div</span>&gt;</div>
<div class="ln" style="top:426px">133</div>
<div class="cl" style="top:426px">                    &lt;/<span class="tg">div</span>&gt;</div>
<div class="ln" style="top:466px">134</div>
<div class="ln" style="top:506px">135</div>
<div class="cl" style="top:506px">                    &lt;<span class="tg">div</span> <span class="at">class</span>=<span class="st">&quot;form-group col-md-8&quot;</span>&gt;</div>
<div class="ln" style="top:546px">136</div>
<div class="cl" style="top:546px">                        &lt;<span class="tg">label</span> <span class="at">for</span>=<span class="st">&quot;ResearcherTags&quot;</span>&gt;</div>
<div class="ln" style="top:586px">137</div>
<div class="cl" style="top:586px">                            Researcher Tags</div>
<div class="ln" style="top:626px">138</div>
<div class="cl" style="top:626px">                        &lt;/<span class="tg">label</span>&gt;</div>
<div class="ln" style="top:666px">139</div>
<div class="cl" style="top:666px">                        &lt;<span class="tg">input</span> <span class="at">type</span>=<span class="st">&quot;text&quot;</span> <span class="at">class</span>=<span class="st">&quot;form-control&quot;</span> <span class="at">name</span>=<span class="st">&quot;ResearcherTags&quot;</span> <span class="at">id</span>=<span class="st">&quot;ResearcherTags&quot;</span> <span class="at">value</span>=<span class="st">&quot;&lt;#PARAM name=&#x27;ResearcherTags&#x27;&gt;&quot;</span> <span class="at">aria-describedby</span>=<span class="st">&quot;researcherTagNotes&quot;</span> /&gt;</div>
<div class="ln" style="top:706px">140</div>
<div class="cl" style="top:706px">                        &lt;<span class="tg">div</span> <span class="at">class</span>=<span class="st">&quot;small-notes&quot;</span> <span class="at">id</span>=<span class="st">&quot;researcherTagNotes&quot;</span>&gt;Enter a comma-separated list of the tags you want associated with this request.&lt;/<span class="tg">div</span>&gt;</div>
<div class="ln" style="top:746px">141</div>
<div class="cl" style="top:746px">                    &lt;/<span class="tg">div</span>&gt;</div>
<div class="ln" style="top:786px">142</div>
<div class="cl" style="top:786px">                &lt;/<span class="tg">section</span>&gt;</div>
<div class="ln" style="top:826px">143</div>
<div class="ln" style="top:866px">144</div>
<div class="ln" style="top:906px">145</div>
<div class="cl" style="top:906px">                &lt;#PHOTOTOGGLE&gt;</div>
<div class="ln" style="top:946px">146</div>
<div class="cl" style="top:946px">            &lt;/<span class="tg">form</span>&gt;</div>
<div class="ln" style="top:986px">147</div>
<div class="cl" style="top:986px">        &lt;/<span class="tg">main</span>&gt;</div>
<div class="ln" style="top:1026px">148</div>
<div class="cl" style="top:1026px">                &lt;#INCLUDE filename=&quot;include_footer.html&quot;&gt;</div>
<div class="ln" style="top:1066px">149</div>
<div class="cl" style="top:1066px">    &lt;/<span class="tg">div</span>&gt;</div>
<div class="ln" style="top:1106px">150</div>
<div class="cl" style="top:1106px">&lt;/<span class="tg">body</span>&gt;</div>
<div class="ln" style="top:1146px">151</div>
<div class="ln" style="top:1186px">152</div>
<div class="cl" style="top:1186px">&lt;/<span class="tg">html</span>&gt;</div>
</div><!--/code-->
  <div class="htrack"></div>
  <div class="hthumb"></div>
</div>

<div class="abs redbox"></div>
<div class="abs ptrack"></div>
<div class="abs pthumb"></div>

</div>
</body></html>
